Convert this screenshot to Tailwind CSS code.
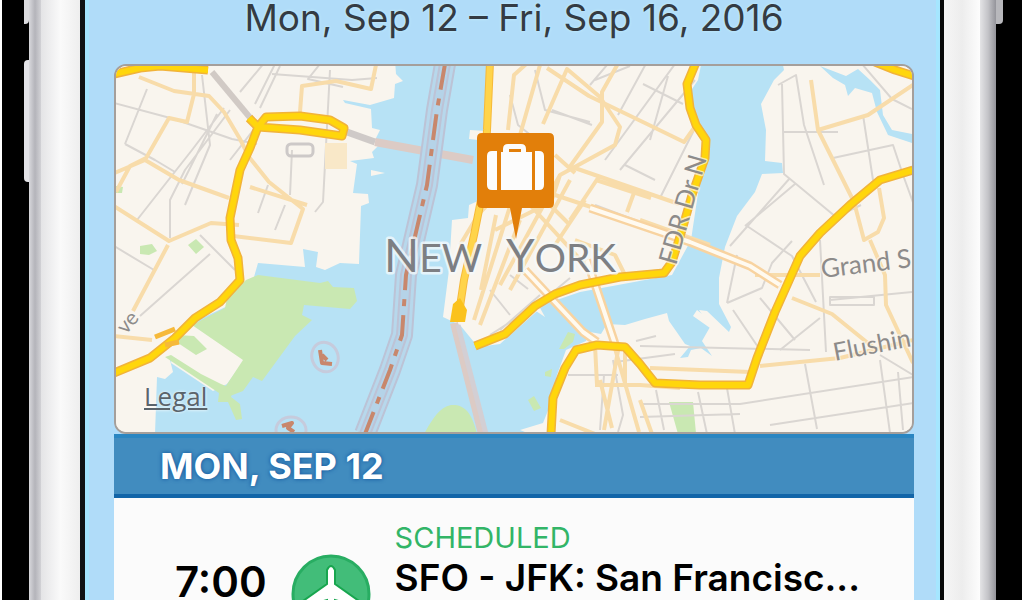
<!DOCTYPE html>
<html lang="en">
  <head>
    <meta charset="UTF-8" />
    <meta name="viewport" content="width=device-width, initial-scale=1.0" />
    <title>Trip itinerary</title>
    <script src="https://cdn.jsdelivr.net/npm/@tailwindcss/browser@4"></script>
  </head>
  <body class="bg-white font-['Inter',sans-serif]">
    <div class="flex h-screen overflow-hidden px-[2px]">
      <!-- left side of the phone with its buttons -->
      <div class="flex w-[27px] shrink-0 flex-col items-end bg-black">
        <div class="h-6 w-[5px] rounded-br-sm bg-[#dcdce0]"></div>
        <div class="mt-9 h-[122px] w-[5px] rounded-l-sm bg-[#e4e4e8]"></div>
      </div>
      <div class="w-3 shrink-0 bg-linear-to-r from-[#d8d8dc] via-[#b4b4ba] to-[#d2d2d6]"></div>
      <div class="w-[39px] shrink-0 bg-linear-to-r from-[#e4e4e6] via-[#fafafa] to-[#eeeeee]"></div>
      <div class="w-[5px] shrink-0 bg-[#101414]"></div>

      <main class="min-w-0 flex-1 border-x-4 border-[#a5e6ff] bg-[#b0dcf9] pr-[22px] pl-[25px]">
        <h1 class="pb-7 text-center text-[37px] leading-9 text-[#343b43] [text-shadow:0_0_3px_#c8f2ff]">
          Mon, Sep 12 – Fri, Sep 16, 2016
        </h1>

        <section class="relative overflow-hidden rounded-xl border-2 border-[#a59f9b] bg-[#f9f5ee]">
          <svg
            class="block w-full"
            viewBox="116 66 796 366"
            fill="none"
            stroke-linejoin="round"
            font-family="Lato, sans-serif"
            role="img"
            aria-label="Map of New York"
          >
            <rect x="114" y="64" width="800" height="370" fill="#f9f5ee" />

            <!-- water -->
            <g fill="#b7e2f5">
              <path d="M395 60 396 74 403 81 395 84 394 98 370 105 343 100 345 103 371 109 372 128 380 130 376 138 378 146 372 152 374 158 350 161 357 164 353 193 368 194 369 203 361 206 359 264 340 263 325 270 316 267 318 252 303 249 305 267 258 263 254 277 240 300 194 322 170 360 173 372 165 379 157 377 155 434 530 434 520 430 543 423 549 408 557 375 566 350 586 341 590 332 601 334 607 324 625 325 645 319 667 313 669 321 676 331 685 344 690 346 680 358 688 357 691 350 701 348 712 356 702 341 710 327 699 310 707 311 729 332 731 327 719 304 719 278 725 247 737 216 755 192 762 174 783 173 782 163 765 161 766 130 761 104 774 80 784 70 782 60 702 60 698 80 690 92 693 120 710 145 700 180 691 240 672 275 580 292 545 304 500 344 478 347 460 325 443 317 449 270 452 220 468 218 469 205 478 201 478 140 469 139 470 130 486 131 486 60Z" />
              <path d="M820 66 846 76 858 69 870 80 880 90 883 115 892 130 912 134 912 143 888 135 877 112 872 93 855 88 848 96 845 85 833 78Z" />
            </g>
            <!-- piers and small land patches -->
            <g fill="#f9f5ee">
              <path d="M697 310l28 22-5 3-27-19zM178 328l12-7 55 38-18 25-14 7-42-28z" />
              <path d="M371 170l14 3-14 3zM540 308l5 9-9-6z" />
            </g>

            <!-- parks -->
            <g fill="#c9e8b2">
              <path d="M246 280 258 275 320 283 328 281 333 287 354 288 357 301 350 309 304 305 302 315 312 320 295 336 262 381 253 377 243 391 230 396 222 392 243 360 192 325 225 308 227 298Z" />
              <path d="M178 343l18 12 11-6-13-13-17-1zM165 357l54 36-1 9 10 0 8 18 6-1-2-15-9-7 2-8-12-5-20-10-30-19zM140 246l12-2 5 7-8 4-9-1zM188 245l8-6 8 8-8 7zM116 186l7 1-1 6-6 0z" />
              <path d="M424 434c8-14 15-27 27-29 13-1 21 7 26 29zM669 402l24 0 3 31-18 1zM559 349l9-17 7 2-2 8-9 7zM545 372l7-3-1 8-6-1zM528 400l6-4 7 12-7 3z" />
            </g>

            <!-- minor streets -->
            <g stroke="#dad6d2" stroke-width="2">
              <path d="M114 103l60 16 58 20 25 5M125 144l22-55M125 144l30 16 20 12M137 220l55-70 32-42M170 238v-38l15-30 45-60M182 184l35-70M202 75l8 70-25 60M230 160l35-45M240 92l25-30M255 104l20-40M260 108l20-42M272 74l80 6 25-2M320 64l-12 15 35 8M330 70l-7 132-8 10M292 150l-2 45M258 213l10-28M275 230l10-25M200 235l35 35M140 316l70-62M114 246l40 24" />
              <path d="M510 95l8 30 20 16M535 70l10 40 45 12M552 110l40 15M605 160l70-96M620 170l75-90M590 85l17-20M643 84l40 20M650 140l18-64M660 198l35-70M595 80l35-14M595 205l85 32M510 275l18 14M490 290l20 25M490 335l50-32 30-25M500 330l40-35M625 165l30 15M648 60l-30 55" />
              <path d="M778 85l18-10 8 50 20 60M783 132l55 0M782 84l2 90 52 43 25-12M862 64l30 35 20 10M745 226l50-42M730 246l60-68M747 226l45 30 24 46M833 158l60-13 10 30 11 30M863 115l10 65M727 303l35-15 10-25 20-22M733 310l25 37M760 298l35 42M780 350l40-32M820 240l6 112M830 300l83-8M830 305h44v-8h-44zM727 303l10-48" />
              <path d="M568 375h50M615 362l60-8M656 390l8 40M698 392l9 42M727 388l8 46M805 364l12 65M880 360l10 73M898 372l5 58M640 404h100l174-27M770 425l143-22M640 346l170 4M600 430l4-55M613 360l10 55-5 17M656 336l-20 5M880 355l33 20M640 417l100-3" />
            </g>
            <rect x="287" y="144" width="26" height="12" rx="4" stroke="#cdc9c8" stroke-width="3" />
            <path d="M325 143h22v26h-22z" fill="#f9e8c8" />
            <path d="M212 72l40 48" stroke="#d1cac5" stroke-width="6" />
            <path d="M347 132l28 10" stroke="#cfcac8" stroke-width="7" />
            <path d="M375 142l98 18M454 323l28 111" stroke="#dccbc5" stroke-width="8" />
            <path d="M458 325l28 109" stroke="#d3cfd4" stroke-width="5" />

            <!-- avenues -->
            <g stroke="#f8dcaa" stroke-width="4">
              <path d="M139 77l35 14 35 5 15 16 16 27 9 18 20 25 34 27-12 34-58-7M194 64v30l-7 28-18-4-24 42-35 15M145 160l34 20 50 18M250 187l57 18M300 112l2-26 34-5 35 8 6-29M114 206l55 35 42-18 28 2M168 245l-35 66M114 336l38 4M116 192l14-26 16-8" />
              <path d="M508 130l6-55 20-18M520 135l20-70M543 124l24-55 33 28 20 30-5 18-55 30-10 30M547 68l42 28 58 28 37 18 10-14M620 60l-18 32 0 30-33 46M569 166l110 38M560 175l-60 110M570 180l-60 110M540 190l120 40M530 205l60 65M600 175l-30 45M635 190l-8 22M585 200l-30 45M596 180l55 18M496 215l-15 75M495 230l50-25M535 190l35 35M512 200l-38 120M520 220l-40 105M460 245l18-30 17-18M555 155l20 18M640 220l70 25M575 240l40 15 10 20 45-5" />
              <path d="M811 80l7 50 25 50 11 22 10 38 14-8 6-14-5-30M818 130l50-15 45-30M870 240l15 35 1 30 27 58M792 298l40 16 42 34M760 366l80-8 73-18M650 368l100 4M595 345l2 40 28 0 0-39M614 345l25 87M595 385h45l40 3M600 380l12 48M560 420l35 14M619 345l-15 85M640 400l12 34M755 275l65 0" />
            </g>
            <!-- bridges, drawn as double lines -->
            <g stroke="#f8d3a0" stroke-width="9">
              <path d="M525 270l58 62 14 10M587 260l28 84M590 208l100 34 60 24 30 19" />
            </g>
            <g stroke="#fffaf0" stroke-width="4">
              <path d="M525 270l58 62 14 10M587 260l28 84M590 208l100 34 60 24 30 19" />
            </g>

            <!-- ferry channel -->
            <path d="M445 64 437 110 427 185 406 275 402 335 390 370 365 434" stroke="#bcc3d6" stroke-width="22" />
            <path d="M445 64 437 110 427 185 406 275 402 335 390 370 365 434" stroke="#b7d8ec" stroke-width="18" />
            <path d="M445 64 437 110 427 185 406 275 402 335 390 370 365 434" stroke="#bdc3d6" stroke-width="12" />
            <path d="M445 64 437 110 427 185 406 275 402 335 390 370 365 434" stroke="#b5d3e8" stroke-width="8" />
            <path d="M445 64 437 110 427 185 406 275 402 335 390 370 365 434" stroke="#c8876c" stroke-width="4" stroke-dasharray="26 9 7 9" />
            <g stroke="#c6cbdc" stroke-width="3">
              <ellipse cx="325" cy="357" rx="13" ry="15" transform="rotate(-20 325 357)" />
              <ellipse cx="291" cy="430" rx="15" ry="13" />
            </g>
            <path d="M320 350l2 13 10 1M322 355l5 5M282 426l10-3-4 5 6 4" stroke="#c8876c" stroke-width="4" />

            <!-- highways -->
            <g>
              <g stroke="#f1b33a" stroke-width="9">
                <path d="M114 373 150 358 175 338 195 318 220 302 240 280 238 258 231 240 230 218 240 170 250 148 258 127 249 118M258 127 266 117 300 116 330 120 344 128 342 136 300 130 258 127M114 74 140 68 160 66 208 70" />
                <path d="M697 60 687 84 690 108 696 125 706 140 705 158 692 195 682 230 672 262 664 273 620 277 580 285 555 294 535 306 505 334 475 346" />
                <path d="M551 434 553 398 565 368 576 350 597 345 625 347 640 364 655 383 700 385 748 385 757 358 775 312 800 256 820 233 850 205 880 180 913 170M875 62 895 70 914 76" />
              </g>
              <g stroke="#ffd60c" stroke-width="6">
                <path d="M114 373 150 358 175 338 195 318 220 302 240 280 238 258 231 240 230 218 240 170 250 148 258 127 249 118M258 127 266 117 300 116 330 120 344 128 342 136 300 130 258 127M114 74 140 68 160 66 208 70" />
                <path d="M697 60 687 84 690 108 696 125 706 140 705 158 692 195 682 230 672 262 664 273 620 277 580 285 555 294 535 306 505 334 475 346" />
                <path d="M551 434 553 398 565 368 576 350 597 345 625 347 640 364 655 383 700 385 748 385 757 358 775 312 800 256 820 233 850 205 880 180 913 170M875 62 895 70 914 76" />
              </g>
              <path d="M490 62 487 130 483 190 474 235 464 280 458 320" stroke="#f6b93a" stroke-width="8" />
              <path d="M490 62 487 130 483 190 474 235 464 280 458 320" stroke="#ffd44a" stroke-width="6" />
              <path d="M460 298l7 12-2 12h-15l3-18z" fill="#fbc21c" />
              <path d="M155 337l20-8M165 345l14-3" stroke="#f6b93a" stroke-width="5" />
            </g>

            <!-- place names -->
            <g fill="#7d7f83" stroke="#f5fafc" stroke-opacity=".75" stroke-width="5" paint-order="stroke">
              <text x="384" y="272" font-size="46">N<tspan font-size="39">EW</tspan></text>
              <text x="506" y="272" font-size="46">Y<tspan font-size="39">ORK</tspan></text>
            </g>
            <g fill="#8d8b8a" stroke="#f9f5ee" stroke-opacity=".7" stroke-width="3" paint-order="stroke" font-size="26">
              <text transform="translate(822 278) rotate(-7)">Grand S</text>
              <text transform="translate(835 361) rotate(-11)" font-size="25">Flushin</text>
              <text transform="translate(676 266) rotate(-74)">FDR Dr N</text>
              <text transform="translate(126 335) rotate(-50)" font-size="21">ve</text>
            </g>

            <!-- trip pin -->
            <path d="M482 133h67q5 0 5 5v65q0 5-5 5h-27l-6 31-6-31h-28q-5 0-5-5v-65q0-5 5-5z" fill="#e27f0a" />
            <g fill="#fcfcfc">
              <path d="M492 151h5v39h-5q-5 0-5-5v-29q0-5 5-5zM535 151h4q5 0 5 5v29q0 5-5 5h-4z" />
              <path fill-rule="evenodd" d="M501 152h2v-3q0-5 5-5h13q5 0 5 5v3h6v38h-31zM509 149v3h12v-3z" />
            </g>
          </svg>
          <a href="#" class="absolute bottom-5 left-7 font-['Open_Sans',sans-serif] text-[26px] leading-8 text-[#5b646b] underline underline-offset-2 [text-shadow:0_0_3px_#fff]">Legal</a>
        </section>

        <section class="bg-[#fbfbfb]">
          <h2 class="border-y-4 border-t-[#2a86c2] border-b-[#1265a8] bg-[#418cbf] px-[46px] py-2 text-4xl leading-10 font-bold text-white [text-shadow:0_0_4px_#0d519b]">
            MON, SEP 12
          </h2>
          <article class="flex items-start gap-6 pt-6 pr-5 pl-[61px]">
            <time class="pt-10 text-[42px] leading-10 font-semibold text-black">7:00</time>
            <svg class="mt-8 size-20 shrink-0" viewBox="0 0 80 80" aria-hidden="true">
              <circle cx="40" cy="40" r="38" fill="#42bd79" stroke="#28ad62" stroke-width="3" />
              <path d="M36 16q4-8 8 0v14l24 17v6l-24-7v14l7 6v4l-11-3-11 3v-4l7-6V46l-24 7v-6l24-17z" fill="#fff" stroke="#18a64f" stroke-width="2" />
            </svg>
            <div class="min-w-0">
              <p class="text-[29px] leading-8 text-[#32b567]">SCHEDULED</p>
              <h3 class="truncate pt-1 text-[37px] leading-10 font-semibold text-black">SFO - JFK: San Francisc...</h3>
            </div>
          </article>
        </section>
      </main>

      <div class="w-1 shrink-0 bg-[#080a0a]"></div>
      <div class="w-9 shrink-0 bg-linear-to-r from-[#f6f6f6] via-[#ededed] to-[#fdfdfd]"></div>
      <div class="w-4 shrink-0 bg-linear-to-r from-[#e4e4e6] via-[#c4c4c8] to-[#94949a]"></div>
      <!-- right side with the power button -->
      <div class="w-[26px] shrink-0 bg-black">
        <div class="h-6 w-[7px] rounded-br-sm bg-[#b8b8bc]"></div>
      </div>
    </div>
  </body>
</html>
